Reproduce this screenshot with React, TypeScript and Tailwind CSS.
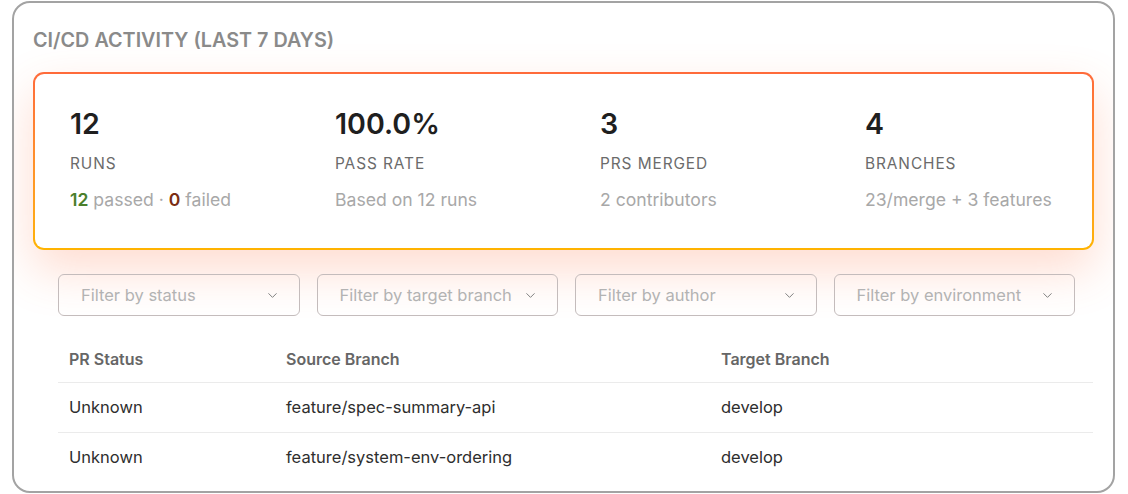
import { ChevronDown } from 'lucide-react'

type Stat = {
  value: string
  label: string
  sub: React.ReactNode
}

const stats: Stat[] = [
  {
    value: '12',
    label: 'Runs',
    sub: (
      <>
        <span className="font-semibold text-[#4b7f2c]">12</span> passed ·{' '}
        <span className="font-semibold text-[#7b2d12]">0</span> failed
      </>
    ),
  },
  { value: '100.0%', label: 'Pass Rate', sub: 'Based on 12 runs' },
  { value: '3', label: 'PRs Merged', sub: '2 contributors' },
  { value: '4', label: 'Branches', sub: '23/merge + 3 features' },
]

const filters = [
  'Filter by status',
  'Filter by target branch',
  'Filter by author',
  'Filter by environment',
]

const rows = [
  { status: 'Unknown', source: 'feature/spec-summary-api', target: 'develop' },
  { status: 'Unknown', source: 'feature/system-env-ordering', target: 'develop' },
]

export default function App() {
  return (
    <div
      className="min-h-[494px] bg-white pt-px pl-[12px] pr-[13px]"
      style={{ fontFamily: 'Inter, "Noto Sans", sans-serif' }}
    >
      <div className="h-[492px] overflow-hidden rounded-[18px] border-2 border-[#a3a3a3] px-[19px] pt-[23px]">
        <h2 className="text-[19.8px] leading-[28px] font-semibold uppercase text-[#8a8a8a]">
          CI/CD Activity (last 7 days)
        </h2>

        {/* stat card, gradient border + soft glow */}
        <div className="mt-[18px] rounded-[11px] bg-gradient-to-b from-[#ff6a3a] to-[#ffb300] p-[2px] shadow-[0_20px_48px_rgba(255,110,60,0.24)]">
          <div className="grid h-[174px] grid-cols-4 gap-x-[73px] rounded-[9px] bg-white px-[35px] pt-[33px]">
            {stats.map((s) => (
              <div key={s.label}>
                <div className="text-[28.6px] leading-[34px] font-semibold text-[#1f1f1f]">{s.value}</div>
                <div className="mt-[13px] text-[15.4px] leading-5 tracking-[0.06em] uppercase text-[#6b6b6b]">
                  {s.label}
                </div>
                <div className="mt-[15px] text-[17.6px] leading-[22px] whitespace-nowrap text-[#a8a8a8]">{s.sub}</div>
              </div>
            ))}
          </div>
        </div>

        <div className="mt-[24px] ml-[25px] grid w-[1017px] grid-cols-4 gap-[17px]">
          {filters.map((f) => (
            <div
              key={f}
              className="flex h-[42px] items-center justify-between rounded-[6px] border border-[#c4bcbc] pr-[19px] pl-[22px]"
            >
              <span className="text-[16.5px] text-[#b3b3b3]">{f}</span>
              <ChevronDown size={15} strokeWidth={1.5} className="text-[#777]" />
            </div>
          ))}
        </div>

        <table className="mt-[20px] ml-[25px] w-[1035px] border-collapse text-left text-[16.5px]">
          <thead>
            <tr className="border-b border-[#ebebeb]">
              <th className="h-[46px] w-[217px] pl-[11px] text-[16px] font-semibold text-[#666]">PR Status</th>
              <th className="w-[435px] pl-[11px] text-[16px] font-semibold text-[#666]">Source Branch</th>
              <th className="pl-[11px] text-[16px] font-semibold text-[#666]">Target Branch</th>
            </tr>
          </thead>
          <tbody>
            {rows.map((r) => (
              <tr key={r.source} className="border-b border-[#ebebeb] text-[#2e2e2e] last:border-b-0">
                <td className="h-[50px] pl-[11px]">{r.status}</td>
                <td className="pl-[11px]">{r.source}</td>
                <td className="pl-[11px]">{r.target}</td>
              </tr>
            ))}
          </tbody>
        </table>
      </div>
    </div>
  )
}
